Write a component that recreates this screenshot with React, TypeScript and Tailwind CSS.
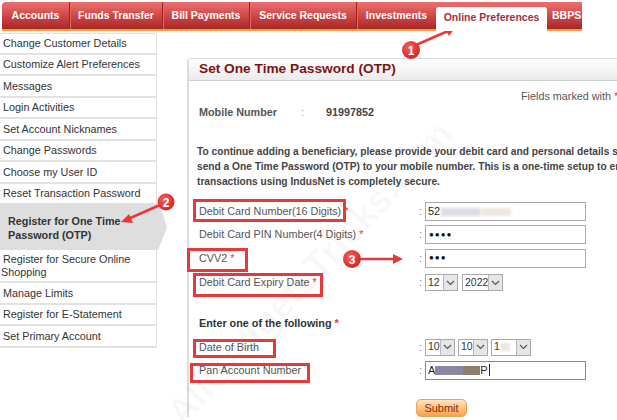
import React from "react";

const tabs = [
  { label: "Accounts", w: "w-[67px]" },
  { label: "Funds Transfer", w: "w-[93px]" },
  { label: "Bill Payments", w: "w-[87px]" },
  { label: "Service Requests", w: "w-[107px]" },
  { label: "Investments", w: "w-[80px]" },
];

const menuTop = [
  "Change Customer Details",
  "Customize Alert Preferences",
  "Messages",
  "Login Activities",
  "Set Account Nicknames",
  "Change Passwords",
  "Choose my User ID",
  "Reset Transaction Password",
];

const menuBottom = ["Manage Limits", "Register for E-Statement", "Set Primary Account"];

function Star() {
  return <span className="text-[#e53935]"> *</span>;
}

function Chevron() {
  return (
    <span className="flex h-full w-[14px] shrink-0 items-center justify-center border-l border-[#b9b9b9] bg-[#e6e6e6]">
      <svg width="9" height="6" viewBox="0 0 9 6">
        <path d="M1 1l3.5 3.5L8 1" fill="none" stroke="#555" strokeWidth="1.2" />
      </svg>
    </span>
  );
}

function Select({ w, children }: { w: string; children: React.ReactNode }) {
  return (
    <div className={`flex h-[17px] ${w} items-stretch border border-[#a9a9a9] bg-white`}>
      <span className="flex flex-1 items-center overflow-hidden whitespace-nowrap pl-[2px] text-[10.5px] text-[#333]">{children}</span>
      <Chevron />
    </div>
  );
}

function Row({ h, label, children }: { h: string; label: React.ReactNode; children: React.ReactNode }) {
  return (
    <div className={`flex ${h} items-center`}>
      <div className="w-[220px] text-[10.8px] text-[#555]">{label}</div>
      <div className="w-[6px] text-[10.8px] text-[#777]">:</div>
      {children}
    </div>
  );
}

export default function App() {
  return (
    <div className="relative h-[420px] w-[617px] overflow-hidden bg-white font-['Liberation_Sans',Arial,sans-serif]">
      {/* top nav */}
      <div className="flex pt-[2px]">
        <div className="ml-[2px] flex h-[29px] rounded-tl-[4px] border-b-2 border-[#f6a03c] bg-gradient-to-b from-[#ec7070] via-[#d04848] to-[#a82626]">
          {tabs.map((t, i) => (
            <div
              key={t.label}
              className={`flex ${t.w} items-center justify-center text-[10.5px] font-bold text-white ${
                i > 0 ? "border-l border-[#9c2222] shadow-[inset_1px_0_0_#e46a6a]" : ""
              }`}
            >
              {t.label}
            </div>
          ))}
          <div className="relative z-10 -mb-[2px] mt-[5px] flex w-[111px] items-center justify-center rounded-t-[3px] bg-white pb-[3px] text-[10.5px] font-bold text-[#a3303d]">
            Online Preferences
          </div>
          <div className="flex w-[35px] items-center overflow-hidden whitespace-nowrap pl-[5px] text-[10.5px] font-bold text-white">
            BBPS
          </div>
        </div>
      </div>

      <div className="flex">
        {/* side menu */}
        <div className="mt-[2px] w-[157px] shrink-0 text-[10.8px] text-[#333]">
          {menuTop.map((m, i) => (
            <div
              key={m}
              className={`flex h-[21.5px] items-center whitespace-nowrap border-b-2 border-r border-[#e2e2e2] bg-white pl-[3px] ${
                i === 0 ? "border-t" : ""
              }`}
            >
              {m}
            </div>
          ))}
          <div className="flex h-[45px] w-[167px] flex-col justify-center bg-[#dedede] pl-[8px] font-bold leading-[14px] text-[#333] [clip-path:polygon(0_0,160px_0,167px_50%,158px_100%,0_100%)]">
            <div>Register for One Time</div>
            <div>Password (OTP)</div>
          </div>
          <div className="flex h-[33px] flex-col justify-center border-b-2 border-r border-[#e2e2e2] bg-white pl-[1px] leading-[13px]">
            <div className="pl-[2px]">Register for Secure Online</div>
            <div>Shopping</div>
          </div>
          {menuBottom.map((m) => (
            <div
              key={m}
              className="flex h-[21.5px] items-center whitespace-nowrap border-b-2 border-r border-[#e2e2e2] bg-white pl-[3px]"
            >
              {m}
            </div>
          ))}
        </div>

        {/* main panel */}
        <div className="ml-[30px] mt-[27px] w-[480px] shrink-0 rounded-tl-[4px] border-l-2 border-t border-[#dcdcdc]">
          <div className="flex h-[22px] items-center border-b border-[#d2d2d2] bg-gradient-to-b from-white to-[#ebebeb] pl-[10px] text-[13.7px] font-bold text-[#7d1414]">
            Set One Time Password (OTP)
          </div>
          <div className="pl-[10px]">
            <div className="ml-[322px] mt-[8px] whitespace-nowrap text-[10.8px] leading-[14px] text-[#555]">
              Fields marked with <span className="text-[#e53935]">*</span> are mandatory
            </div>
            <div className="mt-[2px] flex text-[10.8px] font-bold leading-[14px] text-[#555]">
              <span className="w-[102px]">Mobile Number</span>
              <span className="w-[25px] font-normal text-[#999]">:</span>
              <span className="text-[#444]">91997852</span>
            </div>
            <div className="-ml-[2px] mt-[25px] whitespace-nowrap text-[10.2px] font-bold leading-[15px] text-[#444]">
              <div>To continue adding a beneficiary, please provide your debit card and personal details so we can</div>
              <div>send a One Time Password (OTP) to your mobile number. This is a one-time setup to ensure</div>
              <div>transactions using IndusNet is completely secure.</div>
            </div>

            <div className="mt-[11px]">
              <Row h="h-[23px]" label={<>Debit Card Number(16 Digits)<Star /></>}>
                <div className="flex h-[19px] w-[161px] items-center border border-[#a9a9a9] bg-white pl-[2px] text-[11px] text-[#222]">
                  52
                  <span className="ml-[1px] inline-block h-[8px] w-[40px] bg-[#dcdde3] blur-[1.5px]" />
                  <span className="inline-block h-[8px] w-[30px] bg-[#ece8e0] blur-[1.5px]" />
                </div>
              </Row>
              <Row h="h-[23px]" label={<>Debit Card PIN Number(4 Digits)<Star /></>}>
                <div className="flex h-[19px] w-[161px] items-center border border-[#a9a9a9] bg-white pl-[3px] text-[8px] tracking-[1px] text-[#111]">
                  ●●●●
                </div>
              </Row>
              <Row h="h-[24px]" label={<>CVV2<Star /></>}>
                <div className="flex h-[19px] w-[161px] items-center border border-[#a9a9a9] bg-white pl-[3px] text-[8px] tracking-[1px] text-[#111]">
                  ●●●
                </div>
              </Row>
              <Row h="h-[25px]" label={<>Debit Card Expiry Date<Star /></>}>
                <div className="flex gap-[4px]">
                  <Select w="w-[33px]">12</Select>
                  <Select w="w-[41px]">2022</Select>
                </div>
              </Row>

              <div className="mt-[20px] h-[16px] text-[10.8px] font-bold leading-[16px] text-[#333]">
                Enter one of the following<Star />
              </div>

              <div className="mt-[5px]">
                <Row h="h-[22px]" label="Date of Birth">
                  <div className="flex gap-[3px]">
                    <Select w="w-[30px]">10</Select>
                    <Select w="w-[30px]">10</Select>
                    <Select w="w-[40px]">
                      1<span className="inline-block h-[8px] w-[10px] bg-[#ebe7e2] blur-[1px]" />
                    </Select>
                  </div>
                </Row>
                <Row h="h-[24px]" label="Pan Account Number">
                  <div className="flex h-[19px] w-[161px] items-center border border-[#4a98de] bg-white pl-[2px] text-[11px] text-[#222]">
                    A
                    <span className="inline-block h-[9px] w-[28px] bg-[#8a87a3]" />
                    <span className="inline-block h-[9px] w-[17px] bg-[#8c7f6c]" />
                    P
                    <span className="ml-[1px] inline-block h-[12px] w-px bg-[#222]" />
                  </div>
                </Row>
              </div>

              <div className="ml-[217px] mt-[17px] flex h-[18px] w-[51px] items-center justify-center rounded-[5px] border border-[#e9a35a] bg-gradient-to-b from-[#ffe4bf] via-[#fcc47e] to-[#f6a24a] text-[11px] text-[#8b2a10]">
                Submit
              </div>
            </div>
          </div>
        </div>
      </div>

      {/* faint watermark */}
      <div className="pointer-events-none absolute left-[110px] top-[245px] w-[400px] -rotate-[47deg] whitespace-nowrap text-center text-[38px] font-bold text-black/[0.03]">
        AllGadgetsTricks.com
      </div>

      {/* annotation boxes */}
      <div className="pointer-events-none absolute left-[193px] top-[199px] h-[23px] w-[153px] border-[3px] border-[#e8393a]" />
      <div className="pointer-events-none absolute left-[187px] top-[248px] h-[24px] w-[61px] border-[3px] border-[#e8393a]" />
      <div className="pointer-events-none absolute left-[193px] top-[273px] h-[24px] w-[130px] border-[3px] border-[#e8393a]" />
      <div className="pointer-events-none absolute left-[193px] top-[339px] h-[19px] w-[83px] border-[3px] border-[#e8393a]" />
      <div className="pointer-events-none absolute left-[190px] top-[363px] h-[20px] w-[120px] border-[3px] border-[#e8393a]" />

      {/* annotation arrows + numbered markers */}
      <svg className="pointer-events-none absolute left-0 top-0" width="617" height="420" viewBox="0 0 617 420">
        <defs>
          <radialGradient id="dot" cx="40%" cy="35%" r="70%">
            <stop offset="0%" stopColor="#f4605a" />
            <stop offset="100%" stopColor="#d3201f" />
          </radialGradient>
        </defs>
        <g stroke="#e8393a" strokeWidth="2.5" strokeLinecap="round" fill="none">
          <path d="M416 45 L448 31" />
          <path d="M160 205 L128 219" />
          <path d="M362 259 L394 259" />
        </g>
        <g fill="#e8393a">
          <path d="M456 27 L444 26 L449 36 Z" />
          <path d="M121 222 L129 214 L133 223 Z" />
          <path d="M403 259 L393 254 L393 264 Z" />
        </g>
        <circle cx="411" cy="50" r="9" fill="url(#dot)" />
        <circle cx="166" cy="202" r="8.5" fill="url(#dot)" />
        <circle cx="352" cy="259" r="9" fill="url(#dot)" />
        <g fill="white" fontFamily="Liberation Sans, Arial, sans-serif" fontSize="12" fontWeight="bold" textAnchor="middle">
          <text x="411" y="54.5">1</text>
          <text x="166" y="206.5">2</text>
          <text x="352" y="263.5">3</text>
        </g>
      </svg>
    </div>
  );
}
